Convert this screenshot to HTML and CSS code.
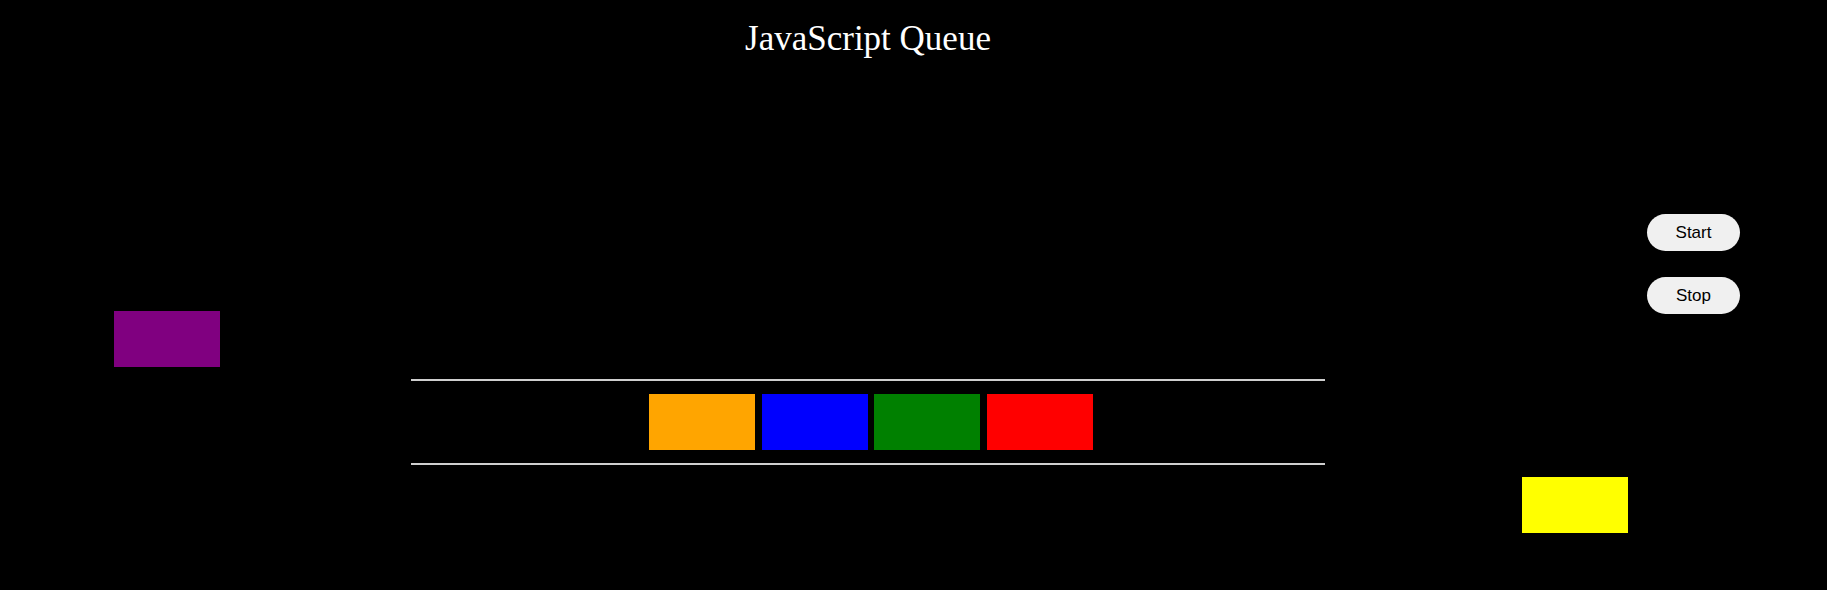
FILE: index.html
```html
<!DOCTYPE html>
<html lang="en">
<head>
<meta charset="utf-8">
<title>JavaScript Queue</title>
<link rel="stylesheet" href="styles.css">
</head>
<body>
<div class="app">
  <h1 class="title">JavaScript Queue</h1>
  <div class="middle">
    <div class="box purple"></div>
    <div class="controls">
      <button class="btn">Start</button>
      <button class="btn">Stop</button>
    </div>
  </div>
  <div class="queue">
    <div class="box orange"></div>
    <div class="box blue"></div>
    <div class="box green"></div>
    <div class="box red"></div>
  </div>
  <div class="bottom">
    <div class="box yellow"></div>
  </div>
</div>
</body>
</html>
```
FILE: styles.css
```css
html, body {
  margin: 0;
  padding: 0;
  background: #000;
}
body {
  width: 1827px;
  height: 590px;
  overflow: hidden;
}
.app {
  display: flex;
  flex-direction: column;
}
.title {
  width: 1736px;
  margin: 19px 0 0 0;
  font-family: "Liberation Serif", "Times New Roman", serif;
  font-weight: normal;
  font-size: 35px;
  line-height: 40px;
  color: #fff;
  text-align: center;
}
.middle {
  display: flex;
  justify-content: space-between;
  height: 320px;
}
.box {
  width: 106px;
  height: 56px;
  flex: none;
}
.purple {
  background: #800080;
  align-self: flex-end;
  margin: 0 0 12px 114px;
}
.controls {
  display: flex;
  flex-direction: column;
  gap: 26px;
  margin: 155px 87px 0 0;
}
.btn {
  width: 93px;
  height: 37px;
  padding: 0;
  border: none;
  border-radius: 19px;
  background: #f0f0f0;
  color: #000;
  font-family: "Liberation Sans", Arial, sans-serif;
  font-size: 17px;
  cursor: pointer;
}
.queue {
  display: flex;
  gap: 6.67px;
  width: 914px;
  box-sizing: border-box;
  margin-left: 411px;
  padding: 13px 0 13px 238px;
  border-top: 2px solid #cfcfcf;
  border-bottom: 2px solid #cfcfcf;
}
.orange { background: #ffa500; }
.blue { background: #0000ff; }
.green { background: #008000; }
.red { background: #ff0000; }
.bottom {
  display: flex;
  padding: 12px 0 0 1522px;
}
.yellow { background: #ffff00; }
```
